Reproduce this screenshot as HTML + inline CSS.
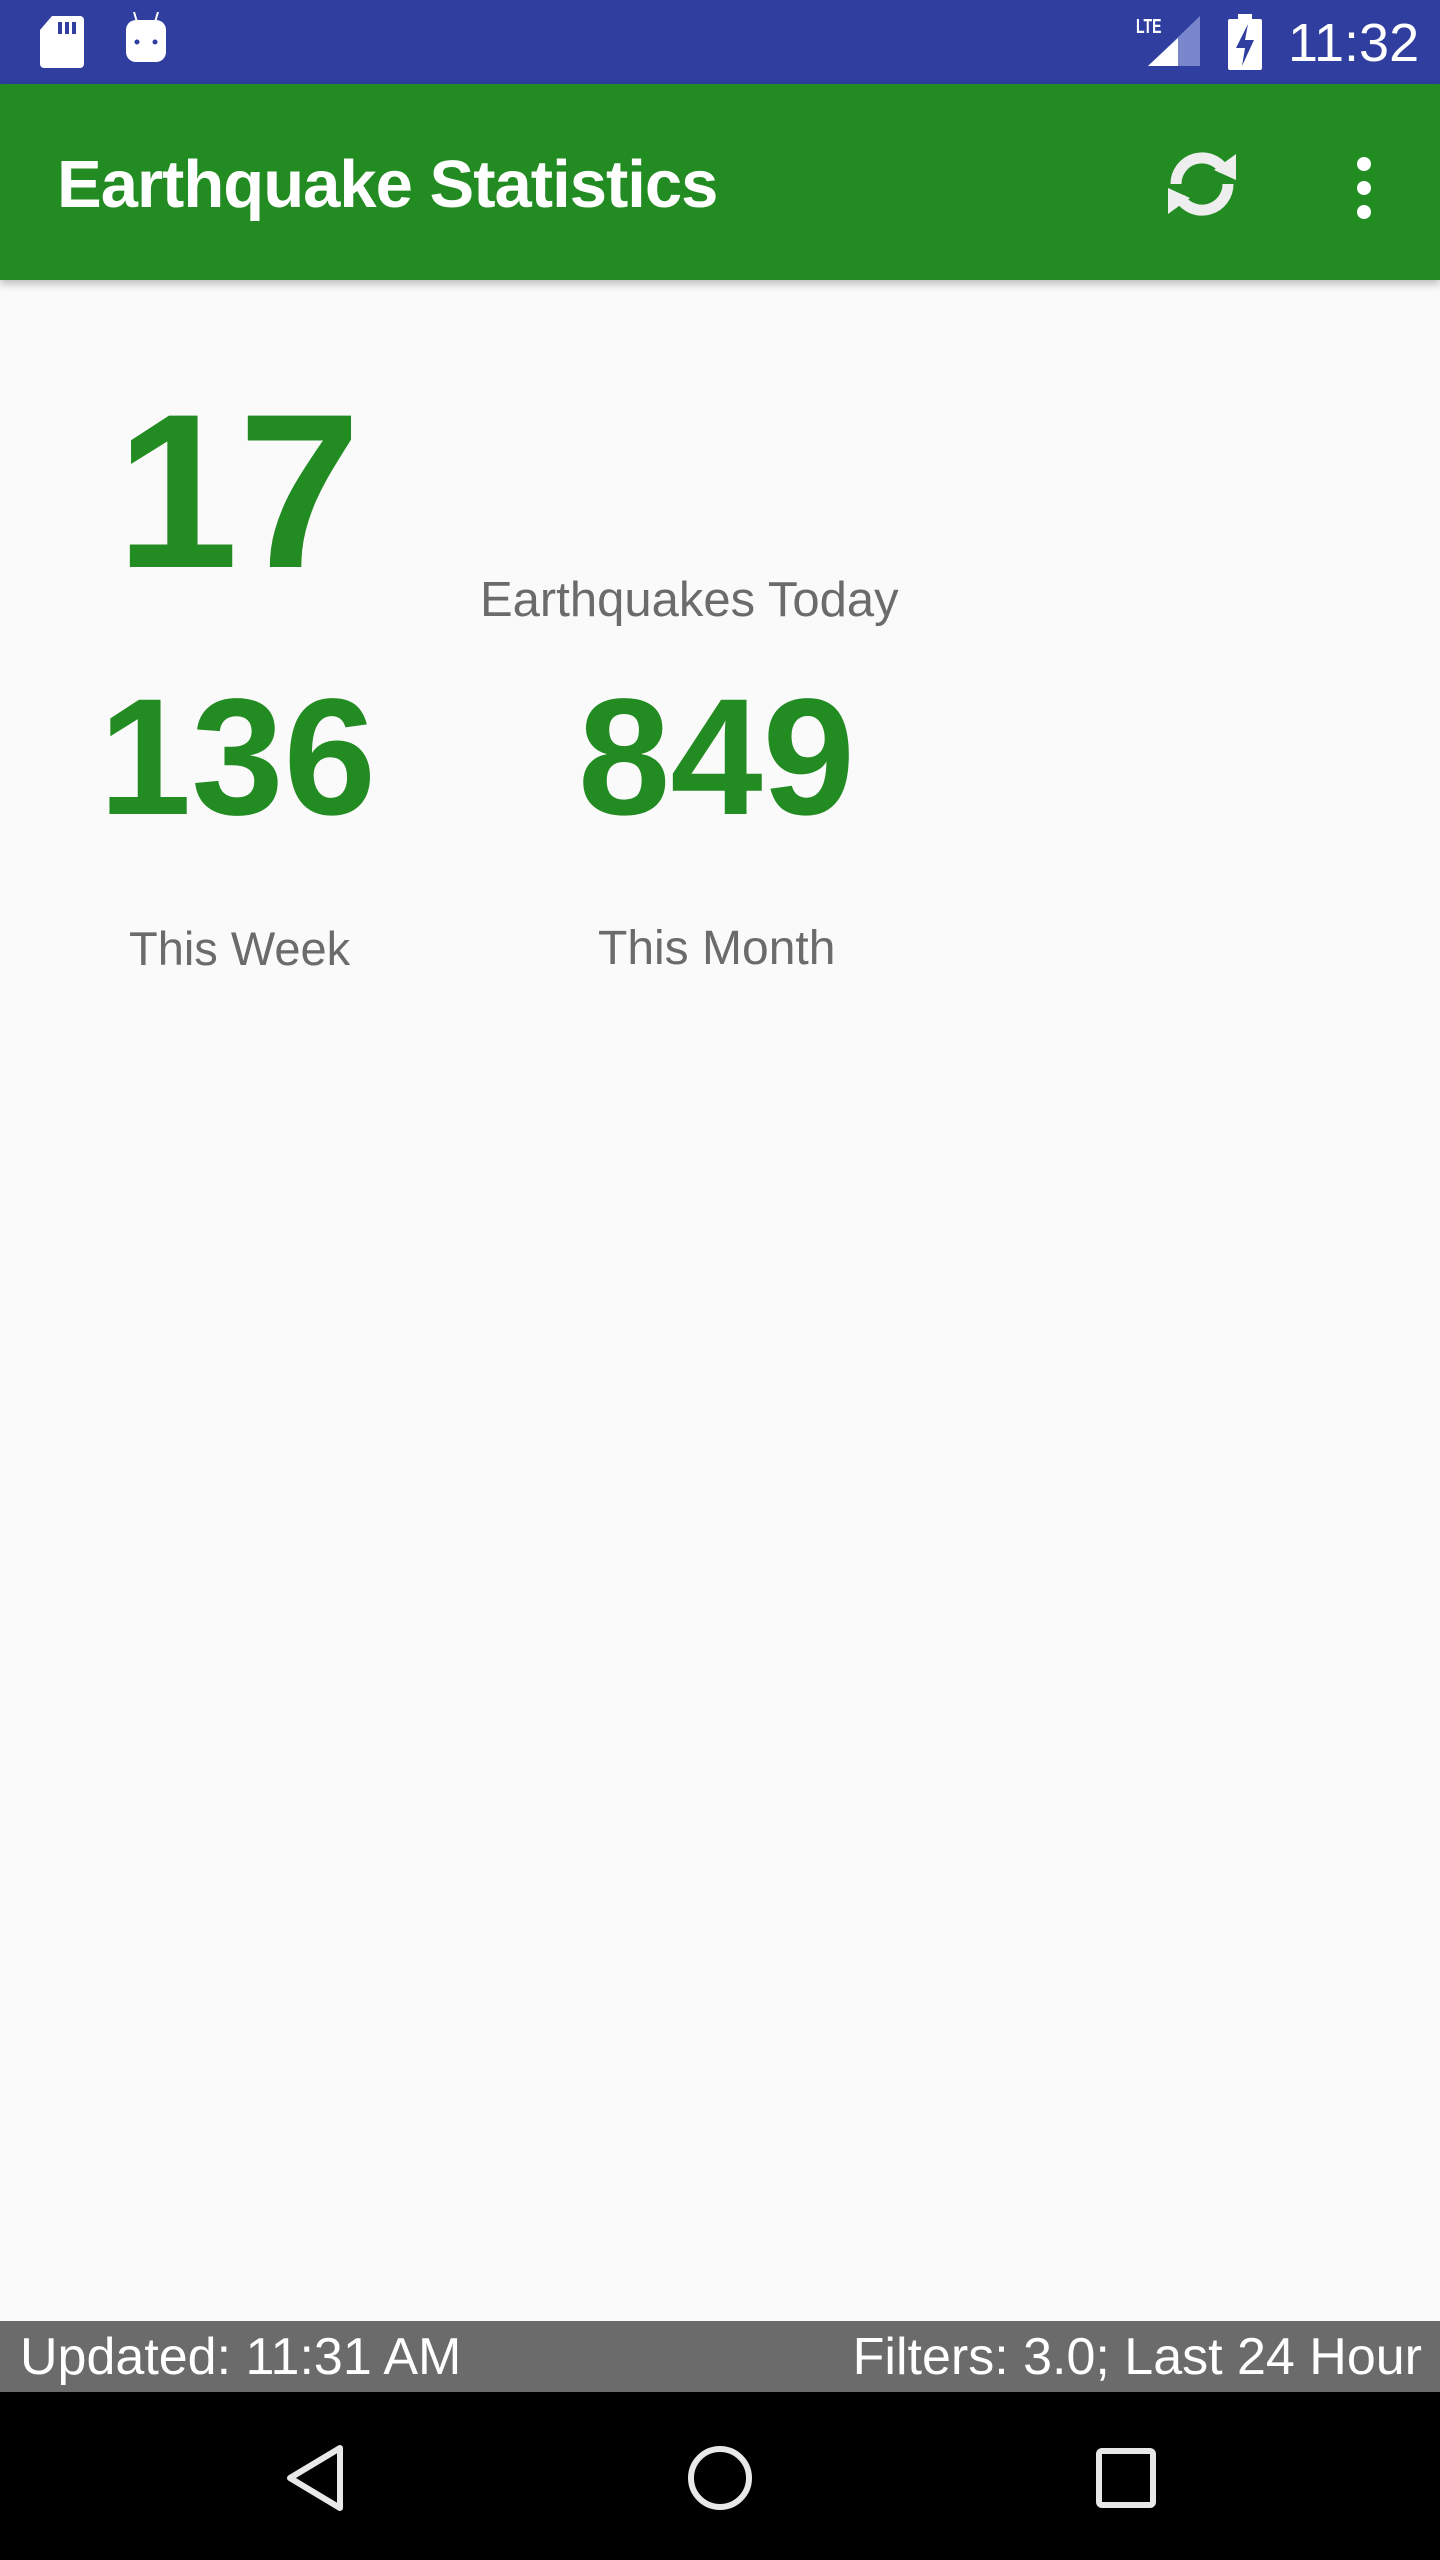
<!DOCTYPE html>
<html><head><meta charset="utf-8"><style>
*{margin:0;padding:0;box-sizing:border-box}
body{width:1440px;height:2560px;background:#fafafa;font-family:"Liberation Sans",Roboto,sans-serif;position:relative;overflow:hidden}
.abs{position:absolute}
#status{left:0;top:0;width:1440px;height:84px;background:#303f9f}
#bar{left:0;top:84px;width:1440px;height:196px;background:#228b22;box-shadow:0 4px 8px rgba(0,0,0,.25)}
.g{color:#228b22;font-weight:bold;white-space:nowrap}
.l{color:#6b6b6b;font-size:49px;white-space:nowrap}
#foot{left:0;top:2321px;width:1440px;height:71px;background:#6b6b6b;color:#fff;font-size:52px}
#nav{left:0;top:2392px;width:1440px;height:168px;background:#000}
</style></head><body>
<div id="status" class="abs">
<svg class="abs" style="left:40px;top:16px" width="44" height="52" viewBox="0 0 44 52"><path d="M12 0H40a4 4 0 0 1 4 4V48a4 4 0 0 1-4 4H4a4 4 0 0 1-4-4V14Z" fill="#fff"/><rect x="18" y="6" width="4" height="12" fill="#303f9f"/><rect x="25" y="6" width="4" height="12" fill="#303f9f"/><rect x="32" y="6" width="4" height="12" fill="#303f9f"/></svg>
<svg class="abs" style="left:124px;top:12px" width="44" height="52" viewBox="0 0 44 52"><path d="M10 0l3 10M34 0l-3 10" stroke="#fff" stroke-width="2"/><rect x="2" y="8" width="40" height="42" rx="10" fill="#fff"/><circle cx="13" cy="30" r="2.5" fill="#303f9f"/><circle cx="31" cy="30" r="2.5" fill="#303f9f"/></svg>
<div class="abs" style="left:1136px;top:16px;color:#fff;font-size:20px;font-weight:bold;transform:scaleX(.7);transform-origin:left">LTE</div>
<svg class="abs" style="left:1148px;top:16px" width="52" height="50" viewBox="0 0 52 50"><path d="M52 0V50H0Z" fill="#7986cb"/><path d="M30 22V50H0Z" fill="#fff"/></svg>
<svg class="abs" style="left:1228px;top:14px" width="34" height="56" viewBox="0 0 34 56"><rect x="10" y="0" width="14" height="6" fill="#fff"/><rect x="0" y="5" width="34" height="51" rx="2" fill="#fff"/><path d="M20 10L8 34h9l-3 18 12-26h-9z" fill="#303f9f"/></svg>
<div class="abs" style="left:1288px;top:12px;color:#fff;font-size:54px">11:32</div>
</div>
<div id="bar" class="abs">
<div class="abs" style="left:57px;top:62px;color:#fff;font-size:67px;font-weight:bold;letter-spacing:-1px">Earthquake Statistics</div>
<svg class="abs" style="left:1158px;top:56px" width="88" height="88" viewBox="0 0 88 88">
<g fill="none" stroke="#eee" stroke-width="11">
<path d="M18 44A26 26 0 0 1 66 30"/>
<path d="M70 44A26 26 0 0 1 22 58"/>
</g>
<path d="M56 30L78 14L78 40Z" fill="#eee"/>
<path d="M32 58L10 74L10 48Z" fill="#eee"/>
</svg>
<svg class="abs" style="left:1346px;top:70px" width="36" height="72" viewBox="0 0 36 72"><circle cx="18" cy="10" r="7" fill="#fff"/><circle cx="18" cy="34" r="7" fill="#fff"/><circle cx="18" cy="58" r="7" fill="#fff"/></svg>
</div>
<div class="abs g" style="left:116px;top:381px;font-size:220px;line-height:1">17</div>
<div class="abs l" style="left:480px;top:572px">Earthquakes Today</div>
<div class="abs g" style="left:99px;top:675px;font-size:166px;line-height:1">136</div>
<div class="abs g" style="left:578px;top:675px;font-size:166px;line-height:1">849</div>
<div class="abs l" style="left:129px;top:921px;font-size:47px">This Week</div>
<div class="abs l" style="left:598px;top:921px;font-size:48px">This Month</div>
<div id="foot" class="abs">
<div class="abs" style="left:20px;top:6px">Updated: 11:31 AM</div>
<div class="abs" style="right:18px;top:6px">Filters: 3.0; Last 24 Hour</div>
</div>
<div id="nav" class="abs">
<svg class="abs" style="left:284px;top:52px" width="64" height="68" viewBox="0 0 64 68"><path d="M56 4V64L6 34Z" fill="none" stroke="#e8e8e8" stroke-width="6" stroke-linejoin="round"/></svg>
<svg class="abs" style="left:686px;top:52px" width="68" height="68" viewBox="0 0 68 68"><circle cx="34" cy="34" r="29" fill="none" stroke="#e8e8e8" stroke-width="6"/></svg>
<svg class="abs" style="left:1096px;top:56px" width="60" height="60" viewBox="0 0 60 60"><rect x="3" y="3" width="54" height="54" rx="3" fill="none" stroke="#e8e8e8" stroke-width="6"/></svg>
</div>
</body></html>
